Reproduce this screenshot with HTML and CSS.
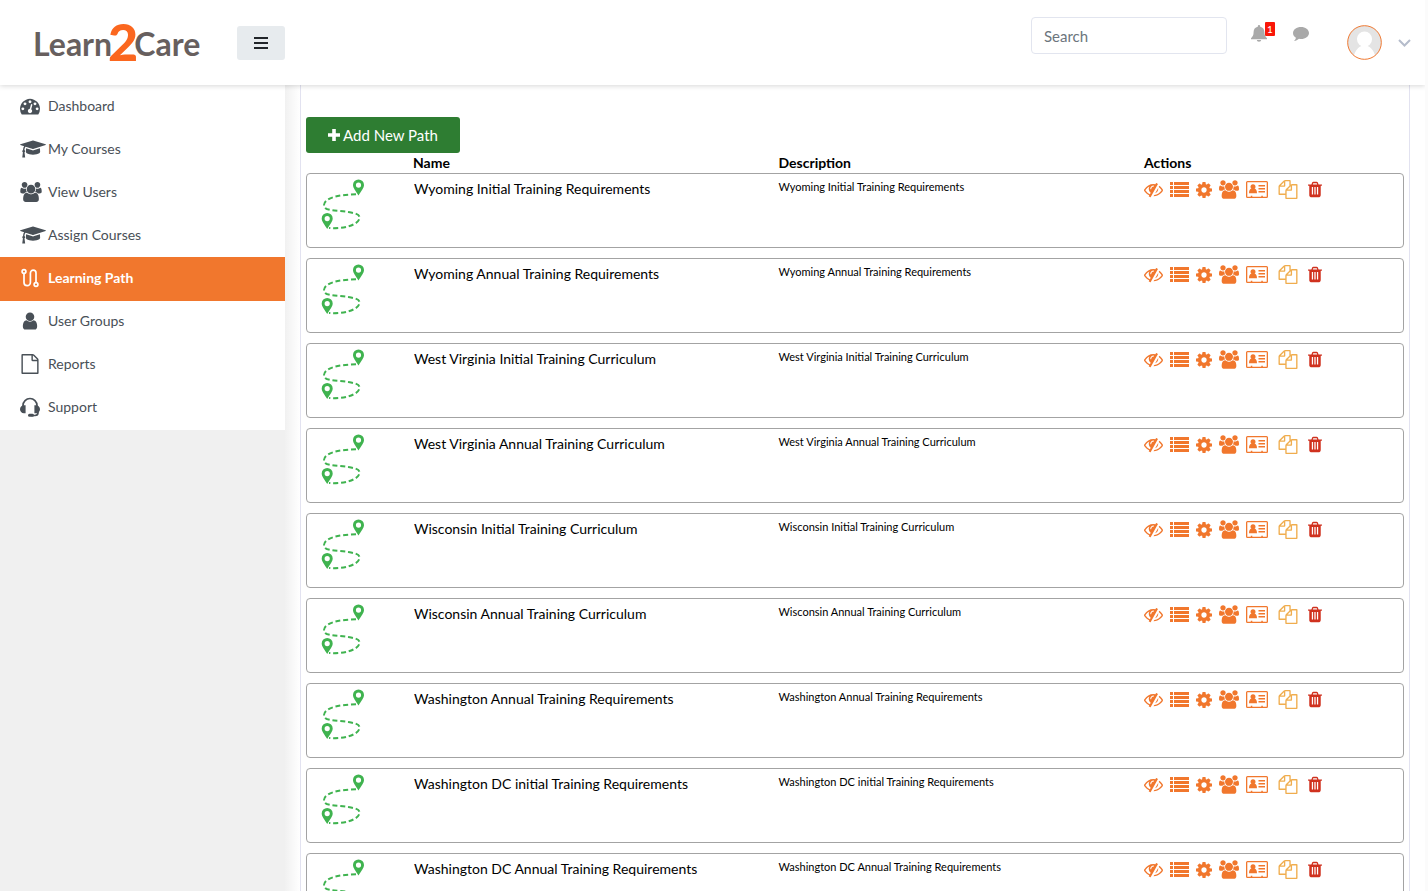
FILE: index.html
```html
<!DOCTYPE html>
<html lang="en">
<head>
<meta charset="utf-8">
<meta name="viewport" content="width=device-width, initial-scale=1">
<title>Learn2Care - Learning Path</title>
<link rel="stylesheet" href="styles.css">
</head>
<body>
<svg class="sprite" aria-hidden="true">
  <symbol id="i-dash" viewBox="0 0 1792 1792"><path d="M384 1152q0-53-37.500-90.500t-90.500-37.500-90.500 37.500-37.500 90.500 37.500 90.500 90.500 37.500 90.500-37.500 37.500-90.500zM576 704q0-53-37.500-90.500t-90.500-37.500-90.500 37.500-37.500 90.500 37.500 90.500 90.500 37.500 90.500-37.500 37.500-90.500zM1004 1185l101-382q6-26-7.500-48.500t-38.500-29.500-48 6.500-30 39.500l-101 382q-60 5-107 43.500t-63 98.500q-20 77 20 146t117 89 146-20 89-117q16-60-6-117t-72-91zM1664 1152q0-53-37.500-90.500t-90.500-37.500-90.500 37.500-37.500 90.500 37.500 90.500 90.500 37.500 90.500-37.500 37.500-90.500zM1024 512q0-53-37.500-90.500t-90.500-37.500-90.500 37.500-37.500 90.500 37.500 90.500 90.500 37.500 90.500-37.500 37.500-90.500zM1472 704q0-53-37.500-90.500t-90.500-37.500-90.500 37.500-37.500 90.500 37.500 90.500 90.500 37.500 90.500-37.500 37.500-90.500zM1792 1152q0 261-141 483-19 29-54 29h-1402q-35 0-54-29-141-221-141-483 0-182 71-348t191-286 286-191 348-71 348 71 286 191 191 286 71 348z"/></symbol>
  <symbol id="i-cap" viewBox="0 0 2304 1792"><path d="M1774 836l18 316q4 69-82 128t-235 93.500-323 34.500-323-34.500-235-93.500-82-128l18-316 574 181q22 7 48 7t48-7zM2304 512q0 23-22 31l-1120 352q-4 1-10 1t-10-1l-652-206q-43 34-71 111.500t-34 178.500q63 36 63 109 0 69-58 107l58 433q2 14-8 25-9 11-24 11h-192q-15 0-24-11-10-11-8-25l58-433q-58-38-58-107 0-73 65-111 11-207 98-330l-333-104q-22-8-22-31t22-31l1120-352q4-1 10-1t10 1l1120 352q22 8 22 31z"/></symbol>
  <symbol id="i-users" viewBox="64 0 1920 1792"><path d="M657 896q-162 5-265 128h-134q-82 0-138-40.500t-56-118.500q0-353 124-353 6 0 43.500 21t97.500 42.500 119 21.500q67 0 133-23-5 37-5 66 0 139 81 256zM1728 1535q0 120-73 189.500t-194 69.500h-874q-121 0-194-69.500t-73-189.500q0-53 3.500-103.500t14-109 26.500-108.500 43-97.500 62-81 85.500-53.500 111.500-20q10 0 43 21.500t73 48 107 48 135 21.500 135-21.500 107-48 73-48 43-21.500q61 0 111.500 20t85.500 53.500 62 81 43 97.500 26.500 108.500 14 109 3.500 103.500zM704 256q0 106-75 181t-181 75-181-75-75-181 75-181 181-75 181 75 75 181zM1408 640q0 159-112.500 271.500t-271.500 112.500-271.500-112.500-112.500-271.500 112.500-271.500 271.500-112.500 271.500 112.500 112.500 271.500zM1984 865q0 78-56 118.500t-138 40.500h-134q-103-123-265-128 81-117 81-256 0-29-5-66 66 23 133 23 59 0 119-21.500t97.500-42.500 43.500-21q124 0 124 353zM1856 256q0 106-75 181t-181 75-181-75-75-181 75-181 181-75 181 75 75 181z"/></symbol>
  <symbol id="i-route" viewBox="0 0 20 20"><g fill="none" stroke="currentColor" stroke-width="1.700"><circle cx="4" cy="3.500" r="1.900"/><circle cx="16" cy="16.500" r="1.900"/><path d="M4 5.400V14.500a3.200 3.200 0 0 0 6.400 0V5a2.800 2.800 0 0 1 5.600 0v9.600"/></g></symbol>
  <symbol id="i-user" viewBox="0 0 1792 1792"><path d="M1536 1399q0 109-62.500 187t-150.500 78h-854q-88 0-150.500-78t-62.500-187q0-85 8.500-160.500t31.500-152 58.500-131 94-89 134.500-34.500q131 128 313 128t313-128q76 0 134.500 34.500t94 89 58.500 131 31.500 152 8.500 160.500zM1280 512q0 159-112.500 271.500t-271.500 112.500-271.500-112.500-112.500-271.500 112.500-271.500 271.500-112.500 271.500 112.500 112.500 271.500z"/></symbol>
  <symbol id="i-file" viewBox="0 0 1792 1792"><path d="M1596 380q28 28 48 76t20 88v1152q0 40-28 68t-68 28h-1344q-40 0-68-28t-28-68v-1600q0-40 28-68t68-28h896q40 0 88 20t76 48zm-444-244v376h376q-10-29-22-41l-313-313q-12-12-41-22zm384 1528v-1024h-416q-40 0-68-28t-28-68v-416h-768v1536h1280z"/></symbol>
  <symbol id="i-headset" viewBox="0 0 20 20"><path d="M3 9.500V8.500a7 7 0 0 1 14 0v1M18 13v2.500a3 3 0 0 1-3 3h-4" fill="none" stroke="currentColor" stroke-width="1.700"/><path d="M5.600 8.300v8h-1.600C1.600 16.300 0 14.500 0 12.300s1.600-4 4-4zM14.400 8.300v8H16c2.400 0 4-1.800 4-4s-1.600-4-4-4z"/><rect x="8" y="16.800" width="6" height="3" rx="1.500"/></symbol>
  <symbol id="i-eye" viewBox="0 0 1792 1792"><path d="M555 1335l78-141q-87-63-136-159t-49-203q0-121 61-225-229 117-381 353 167 258 427 375zm389-759q0-20-14-34t-34-14q-125 0-214.500 89.500t-89.500 214.500q0 20 14 34t34 14 34-14 14-34q0-86 61-147t147-61q20 0 34-14t14-34zm363-191q0 7-1 9-106 189-316 567t-315 566l-49 89q-10 16-28 16-12 0-134-70-16-10-16-28 0-12 44-87-143-65-263.500-173t-208.500-245q-20-31-20-69t20-69q153-235 380-371t496-136q89 0 180 17l54-97q10-16 28-16 5 0 18 6t31 15.500 33 18.500 31.500 18.500 19.500 11.500q16 10 16 27zm37 447q0 139-79 253.500t-209 164.500l280-502q8 45 8 84zm448 128q0 35-20 69-39 64-109 145-150 172-347.500 267t-419.500 95l74-132q212-18 392.500-137t301.500-307q-115-179-282-294l63-112q95 64 182.500 153t144.500 184q20 34 20 69z"/></symbol>
  <symbol id="i-list" viewBox="0 0 19 19"><path d="M0 2h3v3H0zM0 6h3v3H0zM0 10h3v3H0zM0 14h3v3H0zM4 2h15v3H4zM4 6h15v3H4zM4 10h15v3H4zM4 14h15v3H4z"/></symbol>
  <symbol id="i-cog" viewBox="128 128 1536 1536"><path d="M1152 896q0-106-75-181t-181-75-181 75-75 181 75 181 181 75 181-75 75-181zm512-109v222q0 12-8 23t-20 13l-185 28q-19 54-39 91 35 50 107 138 10 12 10 25t-9 23q-27 37-99 108t-94 71q-12 0-26-9l-138-108q-44 23-91 38-16 136-29 186-7 28-36 28h-222q-14 0-24.500-8.500t-11.500-21.500l-28-184q-49-16-90-37l-141 107q-10 9-25 9-14 0-25-11-126-114-165-168-7-10-7-23 0-12 8-23 15-21 51-66.500t54-70.500q-27-50-41-99l-183-27q-13-2-21-12.500t-8-23.500v-222q0-12 8-23t19-13l186-28q14-46 39-92-40-57-107-138-10-12-10-24 0-10 9-23 26-36 98.500-107.500t94.500-71.500q13 0 26 10l138 107q44-23 91-38 16-136 29-186 7-28 36-28h222q14 0 24.500 8.500t11.500 21.500l28 184q49 16 90 37l142-107q9-9 24-9 13 0 25 10 129 119 165 170 7 8 7 22 0 12-8 23-15 21-51 66.500t-54 70.500q26 50 41 98l183 28q13 2 21 12.500t8 23.500z"/></symbol>
  <symbol id="i-card" viewBox="0 0 22 17"><path fill-rule="evenodd" d="M1.500 0h19A1.500 1.500 0 0 1 22 1.500v14a1.500 1.500 0 0 1-1.500 1.500h-19A1.500 1.500 0 0 1 0 15.500v-14A1.500 1.500 0 0 1 1.500 0zM1.300 1.300v14.400h3.500v-1h1.500v1h9v-1h1.500v1h3.900V1.300z"/><circle cx="7" cy="5.800" r="2.500"/><path d="M3 12.300c0-3 1-4.600 2.400-4.600h3.200c1.400 0 2.400 1.600 2.400 4.600zM12.500 4h6.500v1.500h-6.500zM12.500 7h6.500v1.500h-6.500zM12.500 10h6.500v1.500h-6.500z"/></symbol>
  <symbol id="i-copy" viewBox="0 0 1792 1792"><path d="M1696 384q40 0 68 28t28 68v1216q0 40-28 68t-68 28h-960q-40 0-68-28t-28-68v-288h-544q-40 0-68-28t-28-68v-672q0-40 20-88t48-76l408-408q28-28 76-48t88-20h416q40 0 68 28t28 68v328q68-40 128-40h416zm-544 213l-299 299h299v-299zm-640-384l-299 299h299v-299zm196 647l316-316v-416h-384v416q0 40-28 68t-68 28h-416v640h512v-256q0-40 20-88t48-76zm956 804v-1152h-384v416q0 40-28 68t-68 28h-416v640h896z"/></symbol>
  <symbol id="i-trash" viewBox="192 128 1408 1536"><path d="M704 1376v-704q0-14-9-23t-23-9h-64q-14 0-23 9t-9 23v704q0 14 9 23t23 9h64q14 0 23-9t9-23zm256 0v-704q0-14-9-23t-23-9h-64q-14 0-23 9t-9 23v704q0 14 9 23t23 9h64q14 0 23-9t9-23zm256 0v-704q0-14-9-23t-23-9h-64q-14 0-23 9t-9 23v704q0 14 9 23t23 9h64q14 0 23-9t9-23zm-544-992h448l-48-117q-7-9-17-11h-317q-10 2-17 11zm928 32v64q0 14-9 23t-23 9h-96v948q0 83-47 143.500t-113 60.500h-832q-66 0-113-58.500t-47-141.500v-952h-96q-14 0-23-9t-9-23v-64q0-14 9-23t23-9h309l70-167q15-37 54-63t79-26h320q40 0 79 26t54 63l70 167h309q14 0 23 9t9 23z"/></symbol>
  <symbol id="i-path" viewBox="0 0 44 52"><path d="M35 15.300C20 15.600 3.800 18 3 26c-.5 6.500 13 5 24 7 6 1 12.500 2 11.500 6.500C36.500 47 20 50 8 49" fill="none" stroke="#3fb34f" stroke-width="2" stroke-dasharray="5 2.800"/><path fill="#3fb34f" fill-rule="evenodd" d="M37.500 16.500C34.500 11.500 32 9 32 6a5.500 5.500 0 0 1 11 0c0 3-2.500 5.500-5.500 10.500zM37.500 3.500a2.600 2.600 0 1 0 0 5.200 2.600 2.600 0 0 0 0-5.200zM6.200 50C3.200 45 .7 42.500.7 39.500a5.500 5.500 0 0 1 11 0c0 3-2.500 5.500-5.500 10.500zM6.200 37a2.600 2.600 0 1 0 0 5.200 2.600 2.600 0 0 0 0-5.200z"/></symbol>
</svg>

<header class="topbar">
  <a class="logo" href="#"><span>Learn</span><span class="logo-two">2</span><span>Care</span></a>
  <button class="menu-btn" type="button" aria-label="Toggle menu"><svg viewBox="0 0 14 12"><path d="M0 0h14v2H0zM0 5h14v2H0zM0 10h14v2H0z"/></svg></button>
  <input class="search" type="search" placeholder="Search" aria-label="Search">
  <button class="bell" type="button" aria-label="Notifications"><svg viewBox="0 0 16 17"><path d="M8 0a1.200 1.200 0 0 1 1.200 1.200v.6C12 2.300 13.400 4.500 13.400 7c0 3.500 1 4.700 2.600 6.200v1H0v-1C1.600 11.700 2.600 10.500 2.600 7c0-2.500 1.400-4.700 4.200-5.200v-.6A1.200 1.200 0 0 1 8 0zM5.800 15h4.400a2.200 1.800 0 0 1-4.400 0z"/></svg><span class="badge">1</span></button>
  <button class="chat" type="button" aria-label="Messages"><svg viewBox="0 0 16 14"><path d="M8 0c4.400 0 8 2.600 8 6s-3.600 6-8 6c-.7 0-1.300 0-2-.2C4.600 13 3 13.900 1 14c1-.9 1.700-2 1.900-3.300C1.100 9.600 0 7.900 0 6c0-3.400 3.600-6 8-6z"/></svg></button>
  <button class="account" type="button" aria-label="Account"><svg class="avatar" viewBox="0 0 36 36"><circle cx="18" cy="18" r="17.500" fill="#e4e4e4"/><g fill="#fff"><circle cx="18" cy="14.500" r="7.800"/><path d="M7 31.500c1.500-5 4.500-9 8-10h6c3.500 1 6.500 5 8 10A17.300 17.300 0 0 1 7 31.500z"/></g><circle cx="18" cy="18" r="17.300" fill="none" stroke="#f1772d"/></svg><svg class="chevron" viewBox="0 0 13 8"><path d="M1 1l5.500 5.500L12 1" fill="none" stroke="#b5bccb" stroke-width="2"/></svg></button>
</header>

<div class="layout">
  <aside class="sidebar">
    <nav class="nav">
      <a href="#"><svg><use href="#i-dash"/></svg>Dashboard</a>
      <a href="#"><svg class="wide"><use href="#i-cap"/></svg>My Courses</a>
      <a href="#"><svg class="mid"><use href="#i-users"/></svg>View Users</a>
      <a href="#"><svg class="wide"><use href="#i-cap"/></svg>Assign Courses</a>
      <a class="active" href="#"><svg><use href="#i-route"/></svg>Learning Path</a>
      <a href="#"><svg><use href="#i-user"/></svg>User Groups</a>
      <a href="#"><svg><use href="#i-file"/></svg>Reports</a>
      <a href="#"><svg><use href="#i-headset"/></svg>Support</a>
    </nav>
  </aside>
  <main class="main">
    <section class="panel">
      <button class="add" type="button"><svg viewBox="0 0 12 12"><path d="M4.200 0h3.600v4.200H12v3.600H7.800V12H4.200V7.800H0V4.200h4.200z"/></svg>Add New Path</button>
      <table class="paths">
        <thead><tr><th></th><th scope="col">Name</th><th scope="col">Description</th><th scope="col">Actions</th></tr></thead>
        <tbody>
          <tr><td><svg class="thumb"><use href="#i-path"/></svg></td><td>Wyoming Initial Training Requirements</td><td class="desc">Wyoming Initial Training Requirements</td><td class="actions"><button aria-label="Hide"><svg><use href="#i-eye"/></svg></button><button aria-label="List"><svg><use href="#i-list"/></svg></button><button class="cog" aria-label="Settings"><svg><use href="#i-cog"/></svg></button><button class="team" aria-label="Users"><svg><use href="#i-users"/></svg></button><button class="card" aria-label="Certificate"><svg><use href="#i-card"/></svg></button><button class="copy" aria-label="Copy"><svg><use href="#i-copy"/></svg></button><button class="trash" aria-label="Delete"><svg><use href="#i-trash"/></svg></button></td></tr>
          <tr><td><svg class="thumb"><use href="#i-path"/></svg></td><td>Wyoming Annual Training Requirements</td><td class="desc">Wyoming Annual Training Requirements</td><td class="actions"><button aria-label="Hide"><svg><use href="#i-eye"/></svg></button><button aria-label="List"><svg><use href="#i-list"/></svg></button><button class="cog" aria-label="Settings"><svg><use href="#i-cog"/></svg></button><button class="team" aria-label="Users"><svg><use href="#i-users"/></svg></button><button class="card" aria-label="Certificate"><svg><use href="#i-card"/></svg></button><button class="copy" aria-label="Copy"><svg><use href="#i-copy"/></svg></button><button class="trash" aria-label="Delete"><svg><use href="#i-trash"/></svg></button></td></tr>
          <tr><td><svg class="thumb"><use href="#i-path"/></svg></td><td>West Virginia Initial Training Curriculum</td><td class="desc">West Virginia Initial Training Curriculum</td><td class="actions"><button aria-label="Hide"><svg><use href="#i-eye"/></svg></button><button aria-label="List"><svg><use href="#i-list"/></svg></button><button class="cog" aria-label="Settings"><svg><use href="#i-cog"/></svg></button><button class="team" aria-label="Users"><svg><use href="#i-users"/></svg></button><button class="card" aria-label="Certificate"><svg><use href="#i-card"/></svg></button><button class="copy" aria-label="Copy"><svg><use href="#i-copy"/></svg></button><button class="trash" aria-label="Delete"><svg><use href="#i-trash"/></svg></button></td></tr>
          <tr><td><svg class="thumb"><use href="#i-path"/></svg></td><td>West Virginia Annual Training Curriculum</td><td class="desc">West Virginia Annual Training Curriculum</td><td class="actions"><button aria-label="Hide"><svg><use href="#i-eye"/></svg></button><button aria-label="List"><svg><use href="#i-list"/></svg></button><button class="cog" aria-label="Settings"><svg><use href="#i-cog"/></svg></button><button class="team" aria-label="Users"><svg><use href="#i-users"/></svg></button><button class="card" aria-label="Certificate"><svg><use href="#i-card"/></svg></button><button class="copy" aria-label="Copy"><svg><use href="#i-copy"/></svg></button><button class="trash" aria-label="Delete"><svg><use href="#i-trash"/></svg></button></td></tr>
          <tr><td><svg class="thumb"><use href="#i-path"/></svg></td><td>Wisconsin Initial Training Curriculum</td><td class="desc">Wisconsin Initial Training Curriculum</td><td class="actions"><button aria-label="Hide"><svg><use href="#i-eye"/></svg></button><button aria-label="List"><svg><use href="#i-list"/></svg></button><button class="cog" aria-label="Settings"><svg><use href="#i-cog"/></svg></button><button class="team" aria-label="Users"><svg><use href="#i-users"/></svg></button><button class="card" aria-label="Certificate"><svg><use href="#i-card"/></svg></button><button class="copy" aria-label="Copy"><svg><use href="#i-copy"/></svg></button><button class="trash" aria-label="Delete"><svg><use href="#i-trash"/></svg></button></td></tr>
          <tr><td><svg class="thumb"><use href="#i-path"/></svg></td><td>Wisconsin Annual Training Curriculum</td><td class="desc">Wisconsin Annual Training Curriculum</td><td class="actions"><button aria-label="Hide"><svg><use href="#i-eye"/></svg></button><button aria-label="List"><svg><use href="#i-list"/></svg></button><button class="cog" aria-label="Settings"><svg><use href="#i-cog"/></svg></button><button class="team" aria-label="Users"><svg><use href="#i-users"/></svg></button><button class="card" aria-label="Certificate"><svg><use href="#i-card"/></svg></button><button class="copy" aria-label="Copy"><svg><use href="#i-copy"/></svg></button><button class="trash" aria-label="Delete"><svg><use href="#i-trash"/></svg></button></td></tr>
          <tr><td><svg class="thumb"><use href="#i-path"/></svg></td><td>Washington Annual Training Requirements</td><td class="desc">Washington Annual Training Requirements</td><td class="actions"><button aria-label="Hide"><svg><use href="#i-eye"/></svg></button><button aria-label="List"><svg><use href="#i-list"/></svg></button><button class="cog" aria-label="Settings"><svg><use href="#i-cog"/></svg></button><button class="team" aria-label="Users"><svg><use href="#i-users"/></svg></button><button class="card" aria-label="Certificate"><svg><use href="#i-card"/></svg></button><button class="copy" aria-label="Copy"><svg><use href="#i-copy"/></svg></button><button class="trash" aria-label="Delete"><svg><use href="#i-trash"/></svg></button></td></tr>
          <tr><td><svg class="thumb"><use href="#i-path"/></svg></td><td>Washington DC initial Training Requirements</td><td class="desc">Washington DC initial Training Requirements</td><td class="actions"><button aria-label="Hide"><svg><use href="#i-eye"/></svg></button><button aria-label="List"><svg><use href="#i-list"/></svg></button><button class="cog" aria-label="Settings"><svg><use href="#i-cog"/></svg></button><button class="team" aria-label="Users"><svg><use href="#i-users"/></svg></button><button class="card" aria-label="Certificate"><svg><use href="#i-card"/></svg></button><button class="copy" aria-label="Copy"><svg><use href="#i-copy"/></svg></button><button class="trash" aria-label="Delete"><svg><use href="#i-trash"/></svg></button></td></tr>
          <tr><td><svg class="thumb"><use href="#i-path"/></svg></td><td>Washington DC Annual Training Requirements</td><td class="desc">Washington DC Annual Training Requirements</td><td class="actions"><button aria-label="Hide"><svg><use href="#i-eye"/></svg></button><button aria-label="List"><svg><use href="#i-list"/></svg></button><button class="cog" aria-label="Settings"><svg><use href="#i-cog"/></svg></button><button class="team" aria-label="Users"><svg><use href="#i-users"/></svg></button><button class="card" aria-label="Certificate"><svg><use href="#i-card"/></svg></button><button class="copy" aria-label="Copy"><svg><use href="#i-copy"/></svg></button><button class="trash" aria-label="Delete"><svg><use href="#i-trash"/></svg></button></td></tr>
        </tbody>
      </table>
    </section>
  </main>
</div>
</body>
</html>
```
FILE: styles.css
```css
* { box-sizing: border-box; }

body {
  margin: 0;
  height: 100vh;
  display: flex;
  flex-direction: column;
  overflow: hidden;
  border-right: 3px solid #fbfbfb;
  background: #fff;
  color: #000;
  font: 15px/20px Lato, "Liberation Sans", sans-serif;
}

svg { display: block; fill: currentColor; flex: none; }
button { border: 0; padding: 0; background: none; font: inherit; color: inherit; cursor: pointer; }
.sprite { position: absolute; width: 0; height: 0; }

/* Top bar */
.topbar {
  position: relative;
  z-index: 1;
  flex: none;
  height: 85px;
  display: flex;
  align-items: flex-start;
  padding: 0 14px 0 33px;
  background: #fff;
  box-shadow: 0 1px 5px rgba(0, 0, 0, .16);
}
.logo {
  display: flex;
  align-items: flex-start;
  width: 204px;
  padding-top: 16px;
  color: #675f5e;
  font-size: 32px;
  font-weight: 700;
  line-height: 56px;
  text-decoration: none;
}
.logo-two { margin: 0 -4px; color: #fb671f; font-size: 52px; font-weight: 900; line-height: 50px; }
.menu-btn {
  width: 48px;
  height: 34px;
  margin-top: 26px;
  display: grid;
  place-items: center;
  border-radius: 3px;
  background: #e7ebee;
  color: #212529;
}
.menu-btn svg { width: 14px; height: 12px; }
.search {
  width: 196px;
  height: 37px;
  margin: 17px 24px 0 auto;
  padding: 0 12px;
  border: 1px solid #e2e5ef;
  border-radius: 4px;
  background: #fff;
  color: #495057;
  font: inherit;
  appearance: none;
}
.search::placeholder { color: #6c757d; opacity: 1; }
.bell { position: relative; margin-top: 25px; color: #a9a9a9; }
.bell svg { width: 16px; height: 17px; }
.badge {
  position: absolute;
  left: 14px;
  top: -3px;
  width: 10px;
  height: 14px;
  border-radius: 1px;
  background: #f91607;
  color: #fff;
  font-size: 10px;
  line-height: 14px;
}
.chat { margin: 27px 38px 0 26px; color: #a9a9a9; }
.chat svg { width: 16px; height: 14px; }
.account { display: flex; align-items: center; gap: 16px; margin-top: 25px; }
.avatar { width: 35px; height: 35px; }
.chevron { width: 13px; height: 8px; }

/* Page body */
.layout { flex: 1; min-height: 0; display: flex; }
.sidebar { flex: none; width: 285px; background: #f0f0f0; }
.nav { padding-bottom: 1px; background: #fff; }
.nav a {
  display: flex;
  align-items: center;
  height: 43px;
  padding: 0 0 1px 20px;
  color: #495057;
  font-size: 14px;
  text-decoration: none;
}
.nav svg { width: 20px; height: 20px; margin-right: 8px; }
.nav .wide { width: 26px; margin-right: 2px; }
.nav .mid { width: 22px; margin-right: 6px; }
.nav .active { background: #f1772d; box-shadow: 0 1px 0 #f1772d; color: #fff; font-weight: 700; }

.main {
  flex: 1;
  min-width: 0;
  padding: 0 15px;
  overflow: hidden;
  background: linear-gradient(to right, #f1f1f1, #fff 15px);
}
.panel {
  min-height: 100%;
  padding: 32px 5px 0;
  border: 1px solid #e2e2f0;
  border-width: 0 1px;
  background: #fff;
}
.add {
  display: flex;
  align-items: center;
  justify-content: center;
  gap: 3px;
  width: 154px;
  height: 36px;
  border-radius: 3px;
  background: #2e7d32;
  color: #fff;
}
.add svg { width: 12px; height: 12px; }

/* Each row is a bordered card, so rows lay out as grids */
.paths, .paths thead, .paths tbody { display: block; font-size: 14px; }
.paths tr { display: grid; grid-template-columns: 107px 1fr 1fr 260px; }
.paths th { padding: 0; text-align: left; font-weight: 700; }
.paths tbody tr {
  height: 75px;
  margin-bottom: 10px;
  border: 1px solid #a3a3a3;
  border-radius: 4px;
}
.paths td { padding: 5px 0 0; }
.paths .desc { padding-top: 3px; font-size: 11px; }
.thumb { width: 44px; height: 52px; margin-left: 14px; }
.paths .actions {
  display: flex;
  align-items: center;
  align-self: start;
  padding: 6px 0 0 1px;
  color: #f1772d;
}
.actions svg { width: 19px; height: 19px; }
.actions button + button { margin-left: 7px; }
.actions .cog svg { width: 16px; height: 16px; }
.actions .team svg { width: 20px; }
.actions .card svg { width: 22px; height: 17px; }
.actions button.copy { margin-left: 10px; color: #f0ad4e; }
.actions .copy svg { width: 20px; }
.actions button.trash { margin-left: 10px; color: #d0311e; }
.actions .trash svg { width: 14px; height: 17px; }
```
